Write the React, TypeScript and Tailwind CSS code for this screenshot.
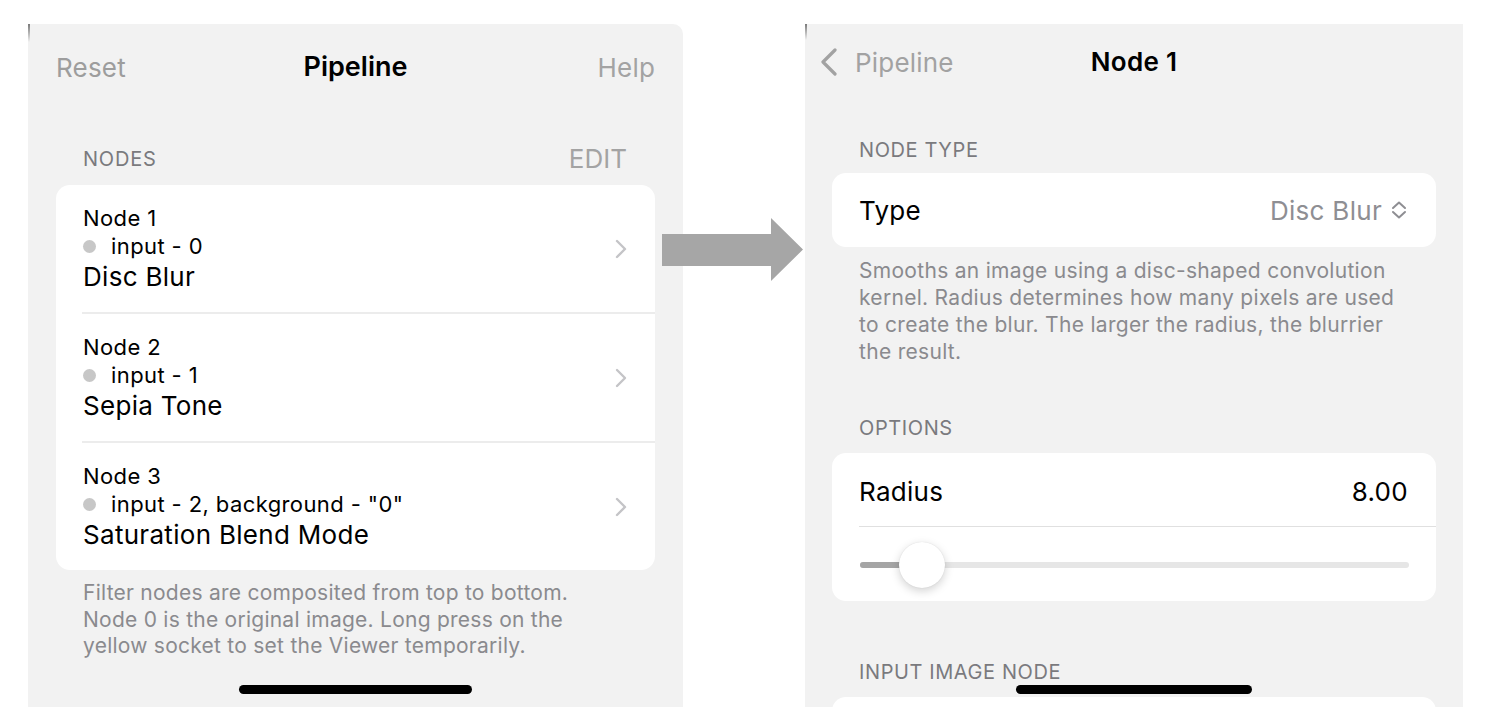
import React from "react";

const font = { fontFamily: "Inter, 'Noto Sans', sans-serif" };

function ChevronRight() {
  return (
    <svg width="14" height="20" viewBox="0 0 14 20" fill="none">
      <path d="M3 2 L11 10 L3 18" stroke="#c4c4c7" strokeWidth="2.4" strokeLinecap="round" strokeLinejoin="round" />
    </svg>
  );
}

function UpDown() {
  return (
    <svg width="18" height="20" viewBox="0 0 18 20" fill="none">
      <path d="M3 8 L9 2.5 L15 8" stroke="#8e8e93" strokeWidth="2" strokeLinecap="round" strokeLinejoin="round" />
      <path d="M3 12 L9 17.5 L15 12" stroke="#8e8e93" strokeWidth="2" strokeLinecap="round" strokeLinejoin="round" />
    </svg>
  );
}

function BackChevron() {
  return (
    <svg width="20" height="28" viewBox="0 0 20 28" fill="none">
      <path d="M16 2 L4 14 L16 26" stroke="#a2a2a2" strokeWidth="3.2" strokeLinecap="round" strokeLinejoin="round" />
    </svg>
  );
}

const nodes = [
  { title: "Node 1", input: "input - 0", name: "Disc Blur" },
  { title: "Node 2", input: "input - 1", name: "Sepia Tone" },
  { title: "Node 3", input: 'input - 2, background - "0"', name: "Saturation Blend Mode" },
];

function LeftPanel() {
  return (
    <div className="relative mt-[24px] ml-[28px] h-[683px] w-[655px] shrink-0 overflow-hidden rounded-tr-[10px] bg-[#f2f2f2]">
      <div className="absolute left-0 top-0 h-[18px] w-[2px] bg-gradient-to-b from-[#7a7a7a] to-[#f2f2f2]" />
      <div className="grid h-[84px] grid-cols-[1fr_auto_1fr] items-center px-[28px] pt-[2px]">
        <span className="text-[26px] tracking-[0.2px] text-[#9d9d9d]">Reset</span>
        <span className="text-[27px] font-semibold text-black">Pipeline</span>
        <span className="justify-self-end text-[26px] tracking-[0.2px] text-[#a3a3a3]">Help</span>
      </div>
      <div className="flex h-[77px] items-end justify-between pb-[11px] pl-[55px] pr-[56px]">
        <span className="text-[20px] tracking-[0.8px] text-[#7a7a7e]">NODES</span>
        <span className="text-[26px] leading-[30px] text-[#a3a3a3]">EDIT</span>
      </div>
      <div className="mx-[28px] overflow-hidden rounded-[14px] bg-white">
        {nodes.map((n, i) => (
          <div key={n.title}>
            {i > 0 && <div className="ml-[26px] h-[2px] bg-[#ececec]" />}
            <div className="flex h-[127px] items-center justify-between pl-[27px] pr-[27px]">
              <div className="flex flex-col">
                <span className="text-[22px] leading-[28px] tracking-[0.4px] text-black">{n.title}</span>
                <span className="flex items-center text-[22px] leading-[28px] tracking-[0.4px] text-black">
                  <span className="mr-[15px] h-[13px] w-[13px] rounded-full bg-[#c7c7c7]" />
                  {n.input}
                </span>
                <span className="text-[26px] leading-[33px] tracking-[0.3px] text-black">{n.name}</span>
              </div>
              <ChevronRight />
            </div>
          </div>
        ))}
      </div>
      <p className="mt-[10px] pl-[55px] text-[21px] leading-[26.5px] tracking-[0.25px] text-[#8a8a8e]">
        <span className="block">Filter nodes are composited from top to bottom.</span>
        <span className="block">Node 0 is the original image. Long press on the</span>
        <span className="block">yellow socket to set the Viewer temporarily.</span>
      </p>
      <div className="absolute left-[211px] top-[661px] h-[9px] w-[233px] rounded-full bg-black" />
    </div>
  );
}

function RightPanel() {
  return (
    <div className="relative mt-[24px] ml-[122px] h-[683px] w-[658px] shrink-0 overflow-hidden bg-[#f2f2f2]">
      <div className="absolute left-0 top-0 h-[16px] w-[2px] bg-gradient-to-b from-[#7a7a7a] to-[#f2f2f2]" />
      <div className="relative flex h-[74px] items-center pl-[14px] pt-[2px]">
        <BackChevron />
        <span className="ml-[16px] text-[26px] tracking-[0.2px] text-[#a2a2a2]">Pipeline</span>
        <span className="pointer-events-none absolute left-0 right-0 top-[18px] text-center text-[26px] font-semibold tracking-[0.3px] text-black">
          Node 1
        </span>
      </div>
      <div className="flex h-[75px] items-end pb-[8px] pl-[54px]">
        <span className="text-[20px] tracking-[0.6px] text-[#7a7a7e]">NODE TYPE</span>
      </div>
      <div className="mx-[27px] flex h-[74px] items-center justify-between rounded-[14px] bg-white pl-[27px] pr-[28px]">
        <span className="text-[26px] tracking-[0.3px] text-black">Type</span>
        <span className="flex items-center gap-[8px] text-[26px] tracking-[0.3px] text-[#8e8e93]">
          Disc Blur
          <UpDown />
        </span>
      </div>
      <p className="mt-[10px] pl-[54px] text-[21px] leading-[27px] tracking-[0.3px] text-[#8a8a8e]">
        <span className="block">Smooths an image using a disc-shaped convolution</span>
        <span className="block">kernel. Radius determines how many pixels are used</span>
        <span className="block">to create the blur. The larger the radius, the blurrier</span>
        <span className="block">the result.</span>
      </p>
      <div className="flex h-[88px] items-end pb-[10px] pl-[54px]">
        <span className="text-[20px] tracking-[0.6px] text-[#7a7a7e]">OPTIONS</span>
      </div>
      <div className="mx-[27px] h-[148px] rounded-[14px] bg-white">
        <div className="flex h-[73px] items-center justify-between pl-[27px] pr-[28px] pt-[4px]">
          <span className="text-[26px] tracking-[0.3px] text-black">Radius</span>
          <span className="text-[26px] tracking-[0.3px] text-black">8.00</span>
        </div>
        <div className="ml-[27px] h-[1px] bg-[#e0e0e0]" />
        <div className="relative ml-[28px] mr-[27px] mt-[35px] h-[6px] rounded-full bg-[#e6e6e6]">
          <div className="h-[6px] w-[60px] rounded-full bg-[#a5a5a5]" />
          <div className="absolute left-[39px] top-[-20px] h-[46px] w-[46px] rounded-full bg-white shadow-[0_3px_10px_rgba(0,0,0,0.18),0_0_1px_rgba(0,0,0,0.15)]" />
        </div>
      </div>
      <div className="flex h-[92px] items-end pb-[6px] pl-[54px]">
        <span className="text-[20px] tracking-[0.6px] text-[#7a7a7e]">INPUT IMAGE NODE</span>
      </div>
      <div className="mx-[27px] mt-[4px] h-[74px] rounded-[14px] bg-white" />
      <div className="absolute left-[211px] top-[661px] h-[9px] w-[236px] rounded-full bg-black" />
    </div>
  );
}

export default function App() {
  return (
    <div className="relative flex h-[728px] w-[1500px] overflow-hidden bg-white" style={font}>
      <LeftPanel />
      <RightPanel />
      <svg className="absolute left-[662px] top-[218px]" width="141" height="63" viewBox="0 0 141 63">
        <polygon points="0,16 109,16 109,0 141,31.5 109,63 109,48 0,48" fill="#a6a6a6" />
      </svg>
    </div>
  );
}
